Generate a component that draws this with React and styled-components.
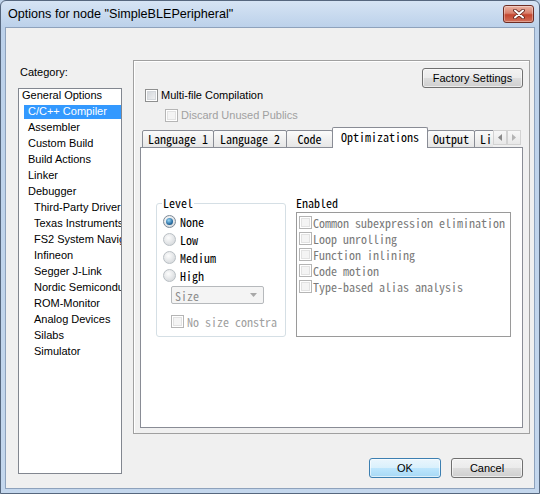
import React from "react";
import styled, { createGlobalStyle } from "styled-components";

const UI = `"Liberation Sans", Arial, sans-serif`;
const MONO = `"Noto Sans Mono CJK SC", "Liberation Mono", monospace`;

const GlobalStyle = createGlobalStyle`
  html, body { margin: 0; padding: 0; background: #bfd3ea; }
  * { box-sizing: border-box; }
`;

const categories = [
  ["General Options", 0],
  ["C/C++ Compiler", 1, true],
  ["Assembler", 1],
  ["Custom Build", 1],
  ["Build Actions", 1],
  ["Linker", 1],
  ["Debugger", 1],
  ["Third-Party Driver", 2],
  ["Texas Instruments", 2],
  ["FS2 System Navigator", 2],
  ["Infineon", 2],
  ["Segger J-Link", 2],
  ["Nordic Semiconductor", 2],
  ["ROM-Monitor", 2],
  ["Analog Devices", 2],
  ["Silabs", 2],
  ["Simulator", 2],
];

const tabs = [
  ["Language 1", 72],
  ["Language 2", 74],
  ["Code", 47],
  ["Optimizations", 96, true],
  ["Output", 48],
  ["Li", 40],
];

const levels = ["None", "Low", "Medium", "High"];

const transforms = [
  "Common subexpression elimination",
  "Loop unrolling",
  "Function inlining",
  "Code motion",
  "Type-based alias analysis",
];

const Window = styled.div`
  width: 540px;
  height: 494px;
  display: flex;
  flex-direction: column;
  border: 1px solid #56677e;
  border-radius: 6px 6px 0 0;
  background: linear-gradient(#d6e4f4 0px, #bcd1ea 26px, #c4d7ed 100%);
  padding: 0 4px 4px;
  font-family: ${UI};
  font-size: 11px;
  color: #000;
`;

const TitleBar = styled.div`
  height: 26px;
  flex: none;
  display: flex;
  align-items: center;
  padding-left: 3px;
`;

const Title = styled.div`
  font-size: 12.6px;
  flex: 1;
  white-space: nowrap;
`;

const CloseButton = styled.div`
  width: 31px;
  height: 18px;
  margin-right: 1px;
  border: 1px solid #6e2d24;
  border-radius: 3px;
  background: linear-gradient(#eab3a3 0%, #d9806c 45%, #c4462f 55%, #d2705a 100%);
  box-shadow: inset 0 0 0 1px rgba(255, 255, 255, 0.35);
  display: flex;
  align-items: center;
  justify-content: center;
`;

const Content = styled.div`
  flex: 1;
  display: flex;
  padding: 32px 4px 0 12px;
  background: #f0f0f0;
  border: 1px solid #8ea2bc;
`;

const LeftColumn = styled.div`
  width: 104px;
  margin-right: 11px;
  display: flex;
  flex-direction: column;
`;

const FieldLabel = styled.div`
  line-height: 14px;
  margin: 5px 0 9px 2px;
`;

const CategoryList = styled.div`
  height: 386px;
  border: 1px solid #828790;
  background: #fff;
  overflow: hidden;
`;

const CategoryItem = styled.div`
  height: 16px;
  line-height: 13px;
  margin-left: ${(p) => [-1, 5, 11][p.$level]}px;
  padding-left: 4px;
  white-space: nowrap;
  color: ${(p) => (p.$selected ? "#fff" : "#000")};
  background: ${(p) =>
    p.$selected ? "linear-gradient(#3399ff, #3399ff) top / 100% 14px no-repeat" : "none"};
`;

const RightColumn = styled.div`
  width: 397px;
  display: flex;
  flex-direction: column;
`;

const Panel = styled.div`
  height: 374px;
  border: 1px solid #a0a0a0;
  box-shadow: inset 1px 1px 0 #fff;
  padding: 7px 6px 5px 6px;
  display: flex;
  flex-direction: column;
`;

const TopBar = styled.div`
  display: flex;
  justify-content: flex-end;
`;

const Button = styled.div`
  width: ${(p) => p.$w}px;
  height: 20px;
  border: 1px solid ${(p) => (p.$default ? "#3c7fb1" : "#707070")};
  border-radius: 3px;
  background: ${(p) =>
    p.$default
      ? "linear-gradient(#eaf6fd 0%, #d9f0fc 50%, #bee6fd 50%, #a7d9f5 100%)"
      : "linear-gradient(#f2f2f2 0%, #ebebeb 50%, #dddddd 50%, #cfcfcf 100%)"};
  box-shadow: inset 0 0 0 1px rgba(255, 255, 255, 0.6);
  display: flex;
  align-items: center;
  justify-content: center;
  line-height: 14px;
`;

const CheckRow = styled.div`
  height: 16px;
  display: flex;
  align-items: center;
  gap: 3px;
  margin: ${(p) => p.$m};
  color: ${(p) => (p.$disabled ? "#a0a0a0" : "#000")};
  white-space: nowrap;
`;

const CheckBox = styled.span`
  flex: none;
  width: 13px;
  height: 13px;
  border: 1px solid ${(p) => (p.$disabled ? "#b5b5b5" : "#8e8f8f")};
  background: ${(p) =>
    p.$disabled ? "#f4f4f4" : "linear-gradient(135deg, #cdd1d6, #f6f6f6)"};
  box-shadow: inset 0 0 0 1px #fff,
    inset 0 0 0 2px ${(p) => (p.$disabled ? "#e2e2e2" : "#d4d7db")};
`;

const TabRow = styled.div`
  margin-top: 4px;
  height: 21px;
  margin-bottom: -1px;
  display: flex;
  align-items: flex-end;
  padding: 0 2px;
  position: relative;
  z-index: 1;
`;

const TabViewport = styled.div`
  flex: 1;
  height: 21px;
  display: flex;
  align-items: flex-end;
  overflow: hidden;
`;

const Tab = styled.div`
  flex: none;
  width: ${(p) => p.$w}px;
  height: ${(p) => (p.$active ? 21 : 18)}px;
  margin-right: -1px;
  border: 1px solid #898c95;
  border-bottom: ${(p) => (p.$active ? "none" : "1px solid #898c95")};
  border-radius: 2px 2px 0 0;
  background: ${(p) => (p.$active ? "#fff" : "linear-gradient(#fbfbfb, #e6e6e6)")};
  position: relative;
  z-index: ${(p) => (p.$active ? 2 : 1)};
  font-family: ${MONO};
  font-size: 12px;
  line-height: ${(p) => (p.$active ? 18 : 16)}px;
  padding-left: ${(p) => (p.$clip ? 5 : 0)}px;
  text-align: ${(p) => (p.$clip ? "left" : "center")};
  white-space: nowrap;
`;

const ScrollArrows = styled.div`
  flex: none;
  align-self: flex-start;
  margin-top: 3px;
  display: flex;
`;

const ArrowButton = styled.div`
  width: 14px;
  height: 15px;
  border: 1px solid #d2d2d2;
  background: linear-gradient(#f7f7f7, #e8e8e8);
  display: flex;
  align-items: center;
  justify-content: center;
`;

const Page = styled.div`
  flex: 1;
  border: 1px solid #898c95;
  background: #fff;
  padding: 49px 0 0 15px;
  display: flex;
  align-items: flex-start;
  gap: 10px;
  font-family: ${MONO};
  font-size: 12px;
`;

const GroupBox = styled.fieldset`
  width: 130px;
  height: 140px;
  margin: 0;
  padding: 0 6px;
  min-width: 0;
  border: 1px solid #d5dfe5;
  border-radius: 3px;
`;

const Legend = styled.legend`
  padding: 0 1px;
  margin-left: -1px;
  line-height: 12px;
`;

const RadioList = styled.div`
  margin-top: 3px;
  display: flex;
  flex-direction: column;
`;

const RadioRow = styled.div`
  height: 18px;
  display: flex;
  align-items: center;
  gap: 4px;
`;

const Radio = styled.span`
  flex: none;
  width: 13px;
  height: 13px;
  border-radius: 50%;
  border: 1px solid ${(p) => (p.$checked ? "#7d8a97" : "#b9bfc4")};
  background: radial-gradient(circle at 40% 35%, #fdfdfd, #d9dcdf 75%);
  display: flex;
  align-items: center;
  justify-content: center;
  &::after {
    content: "";
    width: 7px;
    height: 7px;
    border-radius: 50%;
    display: ${(p) => (p.$checked ? "block" : "none")};
    background: radial-gradient(circle at 40% 35%, #9ad8f7, #2a6ea3 60%, #133e62);
  }
`;

const Select = styled.div`
  margin: 2px 0 0 8px;
  width: 93px;
  height: 18px;
  border: 1px solid #b6b9bc;
  border-radius: 2px;
  background: #f4f4f4;
  color: #8d8d8d;
  display: flex;
  align-items: center;
  justify-content: space-between;
  padding: 0 6px 0 3px;
`;

const ClipRow = styled.div`
  width: 106px;
  margin: 9px 0 0 8px;
  overflow: hidden;
`;

const EnabledColumn = styled.div`
  display: flex;
  flex-direction: column;
`;

const EnabledLabel = styled.div`
  line-height: 12px;
`;

const EnabledList = styled.div`
  margin-top: 3px;
  width: 215px;
  height: 125px;
  border: 1px solid #9a9a9a;
  padding: 1px 0 0 2px;
`;

const EnabledItem = styled.div`
  height: 16px;
  display: flex;
  align-items: center;
  gap: 1px;
  color: #7a7a7a;
  white-space: nowrap;
`;

const Footer = styled.div`
  margin-top: 24px;
  padding-right: 7px;
  display: flex;
  justify-content: flex-end;
  gap: 10px;
`;

const CloseIcon = () => (
  <svg width="12" height="10" viewBox="0 0 12 10">
    <path d="M2 1.5 L10 8.5 M10 1.5 L2 8.5" stroke="#5a1f17" strokeWidth="3.6" strokeLinecap="round" />
    <path d="M2 1.5 L10 8.5 M10 1.5 L2 8.5" stroke="#fff" strokeWidth="2" strokeLinecap="round" />
  </svg>
);

const Arrow = ({ dir, color }) => (
  <svg width="4" height="7" viewBox="0 0 4 7">
    <polygon points={dir === "left" ? "4,0 0,3.5 4,7" : "0,0 4,3.5 0,7"} fill={color} />
  </svg>
);

const DownArrow = () => (
  <svg width="7" height="4" viewBox="0 0 7 4">
    <polygon points="0,0 7,0 3.5,4" fill="#a8a8a8" />
  </svg>
);

export default function App() {
  return (
    <>
      <GlobalStyle />
      <Window>
        <TitleBar>
          <Title>{'Options for node "SimpleBLEPeripheral"'}</Title>
          <CloseButton>
            <CloseIcon />
          </CloseButton>
        </TitleBar>
        <Content>
          <LeftColumn>
            <FieldLabel>Category:</FieldLabel>
            <CategoryList>
              {categories.map(([name, level, selected]) => (
                <CategoryItem key={name} $level={level} $selected={selected}>
                  {name}
                </CategoryItem>
              ))}
            </CategoryList>
          </LeftColumn>

          <RightColumn>
            <Panel>
              <TopBar>
                <Button $w={101}>Factory Settings</Button>
              </TopBar>
              <CheckRow $m="-1px 0 0 5px">
                <CheckBox />
                Multi-file Compilation
              </CheckRow>
              <CheckRow $m="4px 0 0 25px" $disabled>
                <CheckBox $disabled />
                Discard Unused Publics
              </CheckRow>

              <TabRow>
                <TabViewport>
                  {tabs.map(([label, w, active]) => (
                    <Tab key={label} $w={w} $active={active} $clip={label === "Li"}>
                      {label}
                    </Tab>
                  ))}
                </TabViewport>
                <ScrollArrows>
                  <ArrowButton>
                    <Arrow dir="left" color="#8a8a8a" />
                  </ArrowButton>
                  <ArrowButton>
                    <Arrow dir="right" color="#b4b4b4" />
                  </ArrowButton>
                </ScrollArrows>
              </TabRow>

              <Page>
                <GroupBox>
                  <Legend>Level</Legend>
                  <RadioList>
                    {levels.map((l, i) => (
                      <RadioRow key={l}>
                        <Radio $checked={i === 0} />
                        {l}
                      </RadioRow>
                    ))}
                  </RadioList>
                  <Select>
                    Size
                    <DownArrow />
                  </Select>
                  <ClipRow>
                    <CheckRow $m="0" $disabled>
                      <CheckBox $disabled />
                      No size constraints
                    </CheckRow>
                  </ClipRow>
                </GroupBox>

                <EnabledColumn>
                  <EnabledLabel>Enabled</EnabledLabel>
                  <EnabledList>
                    {transforms.map((t) => (
                      <EnabledItem key={t}>
                        <CheckBox $disabled />
                        {t}
                      </EnabledItem>
                    ))}
                  </EnabledList>
                </EnabledColumn>
              </Page>
            </Panel>

            <Footer>
              <Button $w={72} $default>
                OK
              </Button>
              <Button $w={72}>Cancel</Button>
            </Footer>
          </RightColumn>
        </Content>
      </Window>
    </>
  );
}
